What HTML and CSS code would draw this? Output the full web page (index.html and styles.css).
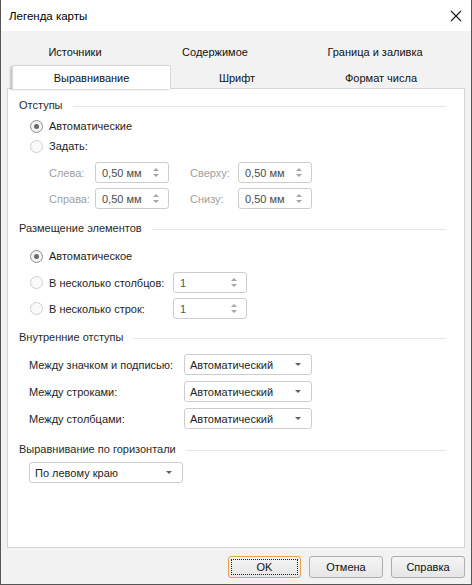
FILE: index.html
```html
<!DOCTYPE html>
<html lang="ru">
<head>
<meta charset="utf-8">
<title>Легенда карты</title>
<link rel="stylesheet" href="styles.css">
</head>
<body>
<div class="window">
  <div class="titlebar">
    <span class="title">Легенда карты</span>
    <svg class="close" width="12" height="12" viewBox="0 0 12 12"><path d="M1 1 L11 11 M11 1 L1 11" stroke="#1a1a1a" stroke-width="1.1" fill="none"/></svg>
  </div>
  <div class="body">
    <div class="tabrow r1">
      <div class="tab t1">Источники</div>
      <div class="tab t2">Содержимое</div>
      <div class="tab t3">Граница и заливка</div>
    </div>
    <div class="tabrow r2">
      <div class="tab t1 active">Выравнивание</div>
      <div class="tab t2">Шрифт</div>
      <div class="tab t3">Формат числа</div>
    </div>
    <div class="panel">
      <div class="hdr h1"><span>Отступы</span><i class="line"></i></div>
      <div class="radiorow rr1"><span class="radio checked"></span><span>Автоматические</span></div>
      <div class="radiorow"><span class="radio"></span><span>Задать:</span></div>
      <div class="spinrow sr1">
        <span class="dlabel l1">Слева:</span>
        <div class="spin"><span>0,50 мм</span><i class="arrows"><b class="up"></b><b class="dn"></b></i></div>
        <span class="dlabel l2">Сверху:</span>
        <div class="spin"><span>0,50 мм</span><i class="arrows"><b class="up"></b><b class="dn"></b></i></div>
      </div>
      <div class="spinrow sr2">
        <span class="dlabel l1">Справа:</span>
        <div class="spin"><span>0,50 мм</span><i class="arrows"><b class="up"></b><b class="dn"></b></i></div>
        <span class="dlabel l2">Снизу:</span>
        <div class="spin"><span>0,50 мм</span><i class="arrows"><b class="up"></b><b class="dn"></b></i></div>
      </div>

      <div class="hdr h2"><span>Размещение элементов</span><i class="line"></i></div>
      <div class="radiorow rr2"><span class="radio checked"></span><span>Автоматическое</span></div>
      <div class="radiorow rs rs1"><span class="rlab"><span class="radio"></span><span>В несколько столбцов:</span></span>
        <div class="spin sm"><span>1</span><i class="arrows"><b class="up"></b><b class="dn"></b></i></div></div>
      <div class="radiorow rs rs2"><span class="rlab"><span class="radio"></span><span>В несколько строк:</span></span>
        <div class="spin sm"><span>1</span><i class="arrows"><b class="up"></b><b class="dn"></b></i></div></div>

      <div class="hdr h3"><span>Внутренние отступы</span><i class="line"></i></div>
      <div class="comborow c1"><span class="clab">Между значком и подписью:</span><div class="combo"><span>Автоматический</span><b class="carrow"></b></div></div>
      <div class="comborow c2"><span class="clab">Между строками:</span><div class="combo"><span>Автоматический</span><b class="carrow"></b></div></div>
      <div class="comborow c2"><span class="clab">Между столбцами:</span><div class="combo"><span>Автоматический</span><b class="carrow"></b></div></div>

      <div class="hdr h4"><span>Выравнивание по горизонтали</span><i class="line"></i></div>
      <div class="comborow c4"><div class="combo wide"><span>По левому краю</span><b class="carrow"></b></div></div>
    </div>
    <div class="buttons">
      <div class="btn ok"><span class="focus">OK</span></div>
      <div class="btn">Отмена</div>
      <div class="btn">Справка</div>
    </div>
  </div>
</div>
</body>
</html>
```

FILE: styles.css
```css
* { box-sizing: border-box; }
html, body { margin: 0; padding: 0; }
body {
  width: 472px;
  height: 585px;
  font-family: "Liberation Sans", Arial, sans-serif;
  font-size: 11px;
  color: #1e1e1e;
  background: #f2f2f2;
  white-space: nowrap;
}
.window {
  width: 472px;
  height: 585px;
  border-left: 1px solid #555;
  border-right: 1px solid #555;
  border-bottom: 1px solid #555;
  display: flex;
  flex-direction: column;
  background: #f2f2f2;
}
.titlebar {
  height: 31px;
  background: #fff;
  display: flex;
  align-items: center;
  justify-content: space-between;
  padding: 0 8px 0 8px;
  flex: none;
}
.title { font-size: 11.5px; color: #000; }
.close { margin-right: 1px; }
.body {
  flex: 1;
  display: flex;
  flex-direction: column;
  padding: 0 6px;
}
.tabrow { display: flex; padding-left: 5px; flex: none; }
.r1 { margin-top: 8px; height: 26px; }
.r2 { height: 24px; margin-bottom: -1px; position: relative; z-index: 2; }
.tab {
  display: flex;
  align-items: center;
  justify-content: center;
  color: #111;
}
.r1 .t1 { width: 126px; }
.r1 .t2 { width: 154px; }
.r1 .t3 { width: 166px; }
.r2 .t1 { width: 159px; }
.r2 .t2 { width: 132px; }
.r2 .t3 { width: 156px; }
.r2 .tab { padding-top: 1px; }
.tab.active {
  background: #fff;
  border: 1px solid #d6d6d6;
  border-bottom: none;
  border-radius: 3px 2px 0 0;
  box-shadow: -2px 1px 2px rgba(0,0,0,0.18);
}
.panel {
  height: 460px;
  flex: none;
  background: #fff;
  border: 1px solid #d5d5d5;
  padding: 0 18px 0 11px;
  display: flex;
  flex-direction: column;
}
.hdr {
  height: 18px;
  display: flex;
  align-items: center;
  color: #2a2a2a;
  flex: none;
}
.hdr .line {
  flex: 1;
  height: 1px;
  background: #e6e6e6;
  margin-left: 10px;
  margin-top: 2px;
}
.h1 { margin-top: 7px; }
.h2 { margin-top: 10px; }
.h3 { margin-top: 9px; }
.h4 { margin-top: 11px; }

.radiorow {
  height: 20px;
  display: flex;
  align-items: center;
  margin-left: 11px;
  flex: none;
}
.rr1 { margin-top: 2px; }
.rr2 { margin-top: 9px; }
.radio {
  width: 13px;
  height: 13px;
  border-radius: 50%;
  border: 1px solid #cfcfcf;
  background: #fafafa;
  margin-right: 6px;
  flex: none;
  display: flex;
  align-items: center;
  justify-content: center;
}
.radio.checked {
  border-color: #8f8f8f;
  background: #f3f3f3;
}
.radio.checked::after {
  content: "";
  width: 5px;
  height: 5px;
  border-radius: 50%;
  background: #6a6a6a;
}
.rs { height: 21px; }
.rs1 { margin-top: 6px; }
.rs2 { margin-top: 5px; }
.rlab { display: flex; align-items: center; width: 143px; flex: none; }

.spinrow {
  height: 21px;
  display: flex;
  align-items: center;
  margin-left: 30px;
  flex: none;
}
.sr1 { margin-top: 6px; }
.sr2 { margin-top: 5px; }
.dlabel { color: #a0a0a0; flex: none; }
.l1 { width: 46px; }
.l2 { width: 48px; margin-left: 21px; }
.spin {
  width: 74px;
  height: 21px;
  border: 1px solid #cdcdcd;
  border-radius: 3px;
  background: #fff;
  display: flex;
  align-items: center;
  justify-content: space-between;
  padding: 0 0 0 6px;
  color: #4a4a4a;
  flex: none;
}
.spin.sm span { color: #555; }
.arrows {
  width: 24px;
  display: flex;
  flex-direction: column;
  align-items: center;
  gap: 3px;
}
.arrows b { width: 0; height: 0; border-left: 3px solid transparent; border-right: 3px solid transparent; }
.arrows .up { border-bottom: 3px solid #a5a5a5; }
.arrows .dn { border-top: 3px solid #a5a5a5; }

.comborow {
  height: 21px;
  display: flex;
  align-items: center;
  margin-left: 10px;
  flex: none;
}
.c1 { margin-top: 8px; }
.c2 { margin-top: 6px; }
.c4 { margin-top: 4px; }
.clab { width: 155px; flex: none; }
.combo {
  width: 128px;
  height: 21px;
  border: 1px solid #cdcdcd;
  border-radius: 3px;
  background: #fff;
  display: flex;
  align-items: center;
  justify-content: space-between;
  padding: 0 10px 0 5px;
  flex: none;
}
.combo.wide { width: 154px; }
.carrow {
  width: 0; height: 0;
  border-left: 3px solid transparent;
  border-right: 3px solid transparent;
  border-top: 3px solid #606060;
}

.buttons {
  display: flex;
  justify-content: flex-end;
  gap: 8px;
  margin-top: 8px;
  flex: none;
}
.btn {
  width: 74px;
  height: 22px;
  border: 1px solid #adadad;
  border-radius: 3px;
  background: linear-gradient(#f4f4f4, #e6e6e6);
  display: flex;
  align-items: center;
  justify-content: center;
  color: #111;
}
.btn.ok {
  width: 73px;
  border: 1px solid #e3a34b;
  padding: 2px;
}
.focus {
  width: 100%;
  height: 100%;
  border: 1px dotted #222;
  display: flex;
  align-items: center;
  justify-content: center;
}
```
